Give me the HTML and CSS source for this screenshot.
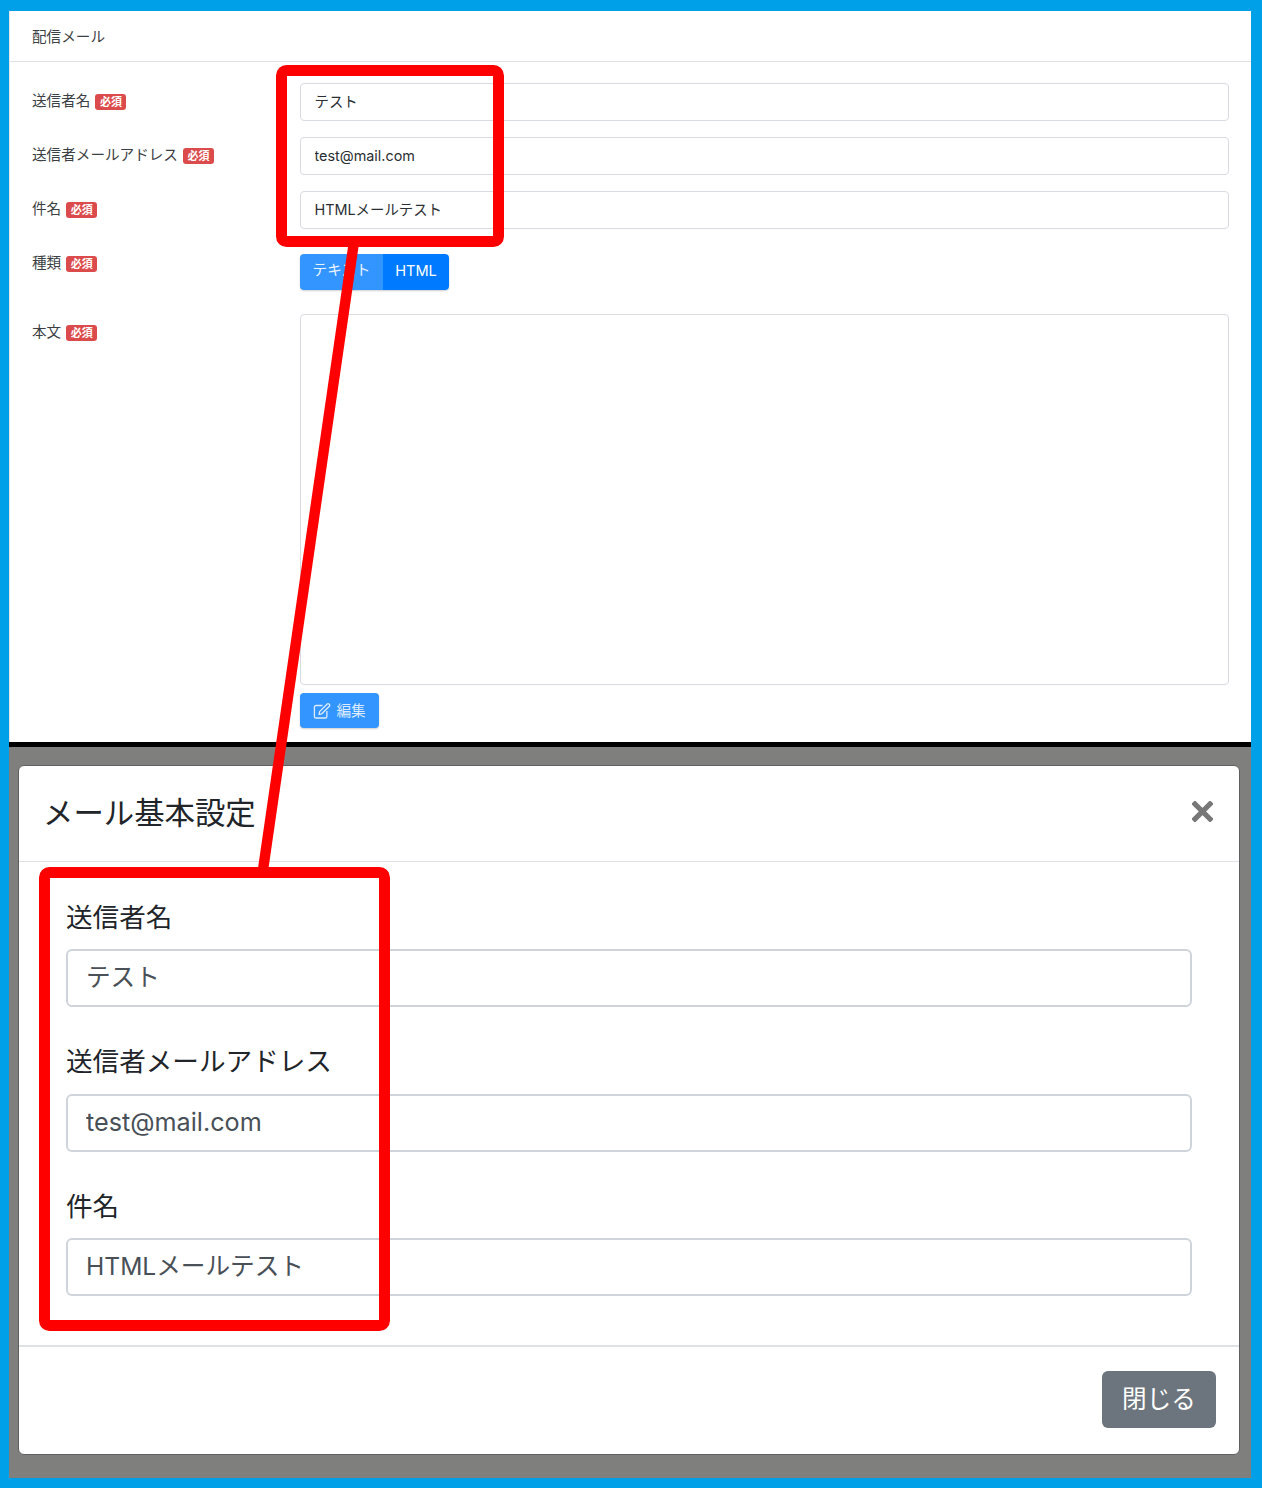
FILE: index.html
```
<!DOCTYPE html>
<html lang="ja">
<head>
<meta charset="utf-8">
<title>配信メール</title>
<link rel="stylesheet" href="styles.css">
</head>
<body>
<div class="frame">
  <section class="card">
    <header class="card-head">配信メール</header>
    <div class="card-body">
      <div class="row">
        <div class="row-label">送信者名<span class="badge">必須</span></div>
        <div class="control"><input class="input" type="text" value="テスト"></div>
      </div>
      <div class="row">
        <div class="row-label">送信者メールアドレス<span class="badge">必須</span></div>
        <div class="control"><input class="input input-latin" type="text" value="test@mail.com"></div>
      </div>
      <div class="row">
        <div class="row-label">件名<span class="badge">必須</span></div>
        <div class="control"><input class="input" type="text" value="HTMLメールテスト"></div>
      </div>
      <div class="row row-type">
        <div class="row-label">種類<span class="badge">必須</span></div>
        <div class="control control-type">
          <div class="btn-group">
            <span class="seg seg-off">テキスト</span>
            <span class="seg seg-on">HTML</span>
          </div>
        </div>
      </div>
      <div class="row row-body">
        <div class="row-label">本文<span class="badge">必須</span></div>
        <div class="control">
          <div class="textarea"></div>
          <button class="btn-edit" type="button">
            <svg class="icon-edit" viewBox="0 0 18 18" width="18" height="18" aria-hidden="true">
              <path d="M9.5 3.5H3a1.6 1.6 0 0 0-1.6 1.6v9.3A1.6 1.6 0 0 0 3 16h9.3a1.6 1.6 0 0 0 1.6-1.6V9" fill="none" stroke="currentColor" stroke-width="1.3"/>
              <path d="M6.6 9.6 14.2 2a1.2 1.2 0 0 1 1.7 0l.5.5a1.2 1.2 0 0 1 0 1.7L8.8 11.8l-2.7.5z" fill="none" stroke="currentColor" stroke-width="1.3" stroke-linejoin="round"/>
            </svg>
            <span class="btn-edit-text">編集</span>
          </button>
        </div>
      </div>
    </div>
  </section>
  <section class="backdrop">
    <div class="modal">
      <header class="modal-head">
        <h2 class="modal-title">メール基本設定</h2>
        <svg class="modal-close" viewBox="0 0 21 21" width="21" height="21" aria-label="閉じる">
          <path d="M3 3 18 18M18 3 3 18" stroke="#777" stroke-width="5.2" stroke-linecap="square" fill="none"/>
        </svg>
      </header>
      <div class="modal-body">
        <div class="field">
          <label class="field-label">送信者名</label>
          <input class="field-input" type="text" value="テスト">
        </div>
        <div class="field">
          <label class="field-label">送信者メールアドレス</label>
          <input class="field-input field-input-latin" type="text" value="test@mail.com">
        </div>
        <div class="field">
          <label class="field-label">件名</label>
          <input class="field-input" type="text" value="HTMLメールテスト">
        </div>
      </div>
      <footer class="modal-foot">
        <button class="btn-close" type="button">閉じる</button>
      </footer>
    </div>
  </section>
</div>
<svg class="annotation" viewBox="0 0 1262 1488" width="1262" height="1488" aria-hidden="true">
  <polygon points="349,240 359.5,240 267.5,875 257,875" fill="#ff0000"/>
  <rect x="281.5" y="70.5" width="217" height="171" rx="5" fill="none" stroke="#ff0000" stroke-width="11"/>
  <rect x="44.5" y="872.5" width="340" height="453" rx="5" fill="none" stroke="#ff0000" stroke-width="11"/>
</svg>
</body>
</html>
```

FILE: styles.css
```
* {
  box-sizing: border-box;
}

html,
body {
  margin: 0;
  padding: 0;
}

body {
  position: relative;
  width: 1262px;
  height: 1488px;
  overflow: hidden;
  font-family: Inter, "Noto Sans CJK JP", sans-serif;
  color: #212529;
  background: #00a0e9;
}

.frame {
  display: flex;
  flex-direction: column;
  width: 1262px;
  height: 1488px;
  border-style: solid;
  border-color: #00a0e9;
  border-width: 11px 11px 10px 9px;
}

.card {
  flex: none;
  height: 731px;
  background: #fff;
  border-left: 1px solid #e3e5ea;
  display: flex;
  flex-direction: column;
}

.card-head {
  flex: none;
  height: 51px;
  padding: 0 22px 2px;
  display: flex;
  align-items: center;
  font-size: 14.6px;
  color: #3c3f43;
  border-bottom: 1px solid #dfe1e6;
}

.card-body {
  padding: 21px 22px 0;
}

.row {
  display: grid;
  grid-template-columns: 268px 1fr;
  margin-bottom: 16px;
}

.row-body {
  margin-bottom: 0;
}

.row-label {
  display: flex;
  align-items: center;
  height: 22px;
  margin-top: 5px;
  font-size: 14.6px;
  color: #3c3f43;
}

.badge {
  display: inline-block;
  margin: 5px 0 0 5px;
  padding: 0 4.5px;
  height: 16px;
  line-height: 16px;
  border-radius: 3px;
  background: #dc4b4b;
  color: #fff;
  font-size: 11px;
  font-weight: 700;
}

.input {
  display: block;
  width: 100%;
  height: 38px;
  padding: 0 13.5px 4px;
  border: 1px solid #d8dbe2;
  border-radius: 4px;
  background: #fff;
  font-family: inherit;
  font-size: 14.4px;
  line-height: 20px;
  color: #2b2f33;
  outline: none;
}

.input-latin {
  padding-bottom: 2px;
}

.control-type {
  padding: 9px 0 8px;
}

.btn-group {
  display: inline-flex;
  height: 36px;
  border-radius: 4px;
  overflow: hidden;
  box-shadow: 0 1px 2px rgba(0, 0, 0, 0.2);
  font-size: 14.6px;
  color: #fff;
}

.seg {
  display: flex;
  align-items: center;
  justify-content: center;
  padding-bottom: 3px;
}

.seg-off {
  width: 83px;
  padding-bottom: 7px;
  background: #3395ff;
  color: #e8f3ff;
}

.seg-on {
  width: 66px;
  background: #007bff;
}

.textarea {
  height: 371px;
  border: 1px solid #d8dbe2;
  border-radius: 4px;
  background: #fff;
}

.btn-edit {
  display: flex;
  align-items: center;
  gap: 6px;
  width: 79px;
  height: 35px;
  margin-top: 8px;
  padding: 0 0 0 12.5px;
  border: 0;
  border-radius: 4px;
  background: #3395ff;
  color: #dcebff;
  font-family: inherit;
  font-size: 14.6px;
  box-shadow: 0 1px 2px rgba(0, 0, 0, 0.2);
}

.btn-edit-text {
  margin-top: -3px;
}

.icon-edit {
  display: block;
  flex: none;
}

.backdrop {
  flex: 1;
  border-top: 5px solid #000;
  background: #7f7f7d;
  padding: 18px 11px 23px 9px;
}

.modal {
  height: 690px;
  display: flex;
  flex-direction: column;
  background: #fff;
  border: 1px solid #5f5f5f;
  border-radius: 6px;
}

.modal-head {
  flex: none;
  height: 96px;
  padding: 0 26px 0 24px;
  display: flex;
  align-items: center;
  justify-content: space-between;
  border-bottom: 1px solid #dee2e6;
}

.modal-title {
  margin: -6px 0 0;
  font-size: 30.4px;
  font-weight: 400;
  color: #212529;
}

.modal-close {
  display: block;
  margin: -4px 0 0 0;
}

.modal-body {
  flex: 1;
  padding: 35px 47px 0;
}

.field {
  margin-bottom: 34.1px;
}

.field-label {
  display: block;
  height: 40px;
  line-height: 40px;
  margin-bottom: 12.4px;
  font-size: 26.6px;
  color: #212529;
}

.field-input {
  display: block;
  width: 100%;
  height: 58px;
  padding: 0 18px 7px;
  border: 2px solid #ced4da;
  border-radius: 6px;
  background: #fff;
  font-family: inherit;
  font-size: 24.6px;
  line-height: 34px;
  color: #495057;
  outline: none;
}

.field-input-latin {
  padding-bottom: 1px;
  font-size: 25.2px;
}

.modal-foot {
  flex: none;
  height: 109px;
  padding: 24px 23px 0 0;
  display: flex;
  justify-content: flex-end;
  align-items: flex-start;
  border-top: 2px solid #dee2e6;
}

.btn-close {
  width: 114px;
  height: 57px;
  padding: 0 0 5px;
  border: 0;
  border-radius: 6px;
  background: #6c757d;
  color: #fff;
  font-family: inherit;
  font-size: 24.6px;
}

.annotation {
  position: absolute;
  left: 0;
  top: 0;
  pointer-events: none;
}
```
